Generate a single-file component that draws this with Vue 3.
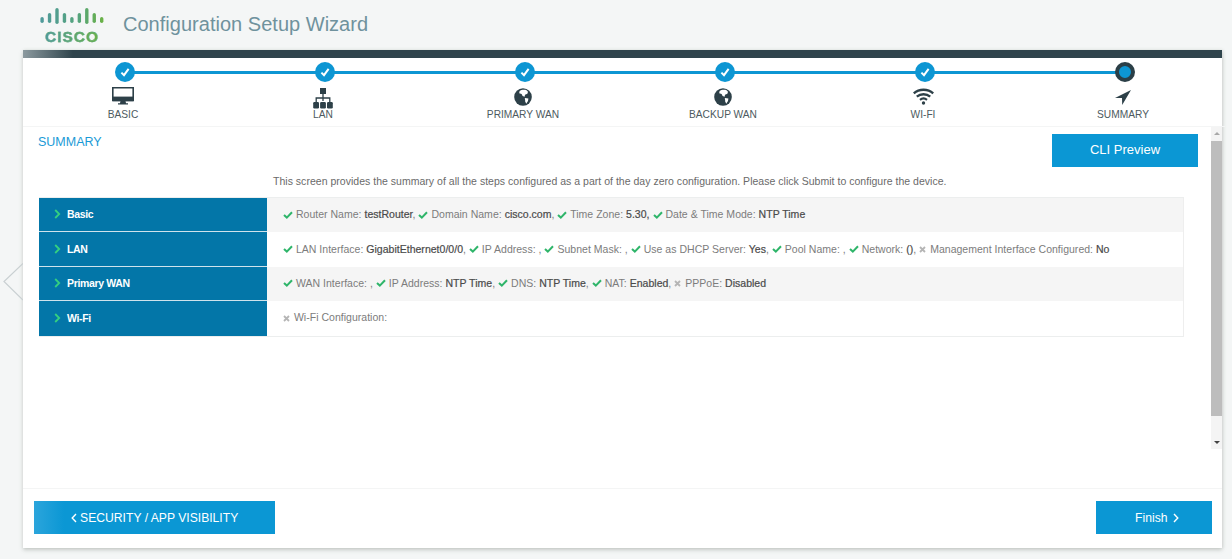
<script setup>
const steps = [
  { label: 'BASIC', icon: 'monitor', done: true },
  { label: 'LAN', icon: 'sitemap', done: true },
  { label: 'PRIMARY WAN', icon: 'globe', done: true },
  { label: 'BACKUP WAN', icon: 'globe', done: true },
  { label: 'WI-FI', icon: 'wifi', done: true },
  { label: 'SUMMARY', icon: 'arrow', done: false }
]
const rows = [
  { title: 'Basic', items: [
    { ok: true, k: 'Router Name:', v: 'testRouter', s: ',' },
    { ok: true, k: 'Domain Name:', v: 'cisco.com', s: ',' },
    { ok: true, k: 'Time Zone:', v: '5.30,', s: '' },
    { ok: true, k: 'Date & Time Mode:', v: 'NTP Time', s: '' }
  ] },
  { title: 'LAN', items: [
    { ok: true, k: 'LAN Interface:', v: 'GigabitEthernet0/0/0', s: ',' },
    { ok: true, k: 'IP Address:', v: '', s: ',' },
    { ok: true, k: 'Subnet Mask:', v: '', s: ',' },
    { ok: true, k: 'Use as DHCP Server:', v: 'Yes', s: ',' },
    { ok: true, k: 'Pool Name:', v: '', s: ',' },
    { ok: true, k: 'Network:', v: '()', s: ',' },
    { ok: false, k: 'Management Interface Configured:', v: 'No', s: '' }
  ] },
  { title: 'Primary WAN', items: [
    { ok: true, k: 'WAN Interface:', v: '', s: ',' },
    { ok: true, k: 'IP Address:', v: 'NTP Time', s: ',' },
    { ok: true, k: 'DNS:', v: 'NTP Time', s: ',' },
    { ok: true, k: 'NAT:', v: 'Enabled', s: ',' },
    { ok: false, k: 'PPPoE:', v: 'Disabled', s: '' }
  ] },
  { title: 'Wi-Fi', items: [
    { ok: false, k: 'Wi-Fi Configuration:', v: '', s: '' }
  ] }
]
const barShape = [[9, 6], [5, 10], [0, 16], [5, 10], [9, 6], [5, 10], [0, 16], [5, 10], [9, 6]]
const bars = barShape.map((b, i) => ({ x: 0.4 + 7.45 * i, y: b[0], h: b[1] }))
</script>

<template>
  <div class="page">
    <svg class="side-arrow" width="20" height="38" viewBox="0 0 20 38">
      <path d="M20 0.5 L1 18.5 L20 37" fill="none" stroke="#c9d0d2" stroke-width="1.2" />
    </svg>

    <header class="header">
      <div class="logo">
        <svg class="bars" width="64" height="16" viewBox="0 0 64 16">
          <defs>
            <linearGradient id="barGrad" x1="0" x2="64" y1="0" y2="0" gradientUnits="userSpaceOnUse">
              <stop offset="0" stop-color="#4f9a9c" />
              <stop offset="0.6" stop-color="#55a47c" />
              <stop offset="1" stop-color="#6bb244" />
            </linearGradient>
          </defs>
          <rect v-for="(b, i) in bars" :key="i" :x="b.x" :y="b.y" width="3.4" :height="b.h" rx="1.7" fill="url(#barGrad)" />
        </svg>
        <span class="cisco">CISCO</span>
      </div>
      <h1 class="app-title">Configuration Setup Wizard</h1>
    </header>

    <main class="panel">
      <div class="topbar"></div>

      <nav class="steps">
        <div v-for="(s, i) in steps" :key="s.label" class="step" :class="{ last: i === steps.length - 1 }">
          <span class="dot" :class="{ current: !s.done }">
            <svg v-if="s.done" width="12" height="12" viewBox="0 0 12 12">
              <path d="M2.4 6.6 L5 9.2 L9.6 2.8" fill="none" stroke="#fff" stroke-width="2" />
            </svg>
          </span>
          <span class="step-icon">
            <svg v-if="s.icon === 'monitor'" width="22" height="18" viewBox="0 0 22 18">
              <path d="M0.8 0.8 H21.2 V13.5 H0.8 Z" fill="none" stroke="#2d4048" stroke-width="1.6" />
              <path d="M0.8 9.6 H21.2 V14.2 H0.8 Z" fill="#2d4048" />
              <path d="M8.5 14 H13.5 L14 16.2 H16 V17.6 H6 V16.2 H8 Z" fill="#2d4048" />
            </svg>
            <svg v-else-if="s.icon === 'sitemap'" class="ic-sitemap" width="20" height="21" viewBox="0 0 20 21">
              <rect x="7" y="0" width="6" height="6" fill="#2d4048" />
              <path d="M10 5.5 V13 M3.2 14 V10 H16.8 V14" fill="none" stroke="#2d4048" stroke-width="1.3" />
              <rect x="0.2" y="14" width="5.8" height="6.4" rx="1.2" fill="#2d4048" />
              <rect x="7.1" y="14" width="5.8" height="6.4" rx="1.2" fill="#2d4048" />
              <rect x="14" y="14" width="5.8" height="6.4" rx="1.2" fill="#2d4048" />
            </svg>
            <svg v-else-if="s.icon === 'globe'" class="ic-globe" width="18" height="18" viewBox="0 0 18 18">
              <circle cx="9" cy="9" r="8.8" fill="#2d4048" />
              <path d="M5.6 3 C7 1.8 10 1.3 12.2 2.1 L14 3.8 L13.4 5.8 L11 6.8 L10.6 8.8 L8.6 8 L7.6 6 L5.2 5.2 Z" fill="#fff" />
              <path d="M10.8 10 L14.4 10.6 L14 13 L12.2 15.8 L11.2 13.2 Z" fill="#fff" />
            </svg>
            <svg v-else-if="s.icon === 'wifi'" class="ic-wifi" width="21" height="17" viewBox="0 0 21 17">
              <path d="M0.8 5.4 C6.2 0.6 14.8 0.6 20.2 5.4" fill="none" stroke="#2d4048" stroke-width="2.4" />
              <path d="M3.8 8.6 C7.6 5.4 13.4 5.4 17.2 8.6" fill="none" stroke="#2d4048" stroke-width="2.4" />
              <path d="M7 11.8 C9 10.2 12 10.2 14 11.8" fill="none" stroke="#2d4048" stroke-width="2.2" />
              <circle cx="10.5" cy="15" r="1.7" fill="#2d4048" />
            </svg>
            <svg v-else class="ic-arrow" width="16" height="15" viewBox="0 0 16 15">
              <path d="M16 0 L7.2 15 L7 8 L0 8 Z" fill="#2d4048" />
            </svg>
          </span>
          <span class="step-label">{{ s.label }}</span>
        </div>
      </nav>

      <section class="body">
        <div class="content">
          <div class="content-head">
            <h2 class="summary-title">SUMMARY</h2>
            <button class="cli-btn" type="button">CLI Preview</button>
          </div>
          <p class="intro">This screen provides the summary of all the steps configured as a part of the day zero configuration. Please click Submit to configure the device.</p>
          <div class="table">
            <div v-for="r in rows" :key="r.title" class="row">
              <div class="row-head">
                <svg width="7" height="10" viewBox="0 0 7 10"><path d="M1.2 1 L5.2 5 L1.2 9" fill="none" stroke="#35d07f" stroke-width="1.8" /></svg>
                <span>{{ r.title }}</span>
              </div>
              <div class="row-body">
                <span v-for="(it, j) in r.items" :key="j" class="item">
                  <svg v-if="it.ok" class="mark" width="10" height="8" viewBox="0 0 10 8"><path d="M1 4 L3.8 6.6 L9 1.2" fill="none" stroke="#2fb56a" stroke-width="2" /></svg>
                  <svg v-else class="mark x" width="7" height="7" viewBox="0 0 7 7"><path d="M1 1 L6 6 M6 1 L1 6" fill="none" stroke="#b5b5b5" stroke-width="1.8" /></svg>
                  {{ it.k }} <b v-if="it.v">{{ it.v }}</b>{{ it.v ? it.s : (it.s ? ' ' + it.s : '') }}
                </span>
              </div>
            </div>
          </div>
        </div>
        <div class="scrollbar">
          <span class="sb-up"></span>
          <span class="sb-thumb"></span>
          <span class="sb-down"></span>
        </div>
      </section>

      <footer class="footer">
        <button class="nav-btn prev" type="button">
          <svg width="6" height="10" viewBox="0 0 6 10"><path d="M5 1 L1.2 5 L5 9" fill="none" stroke="#fff" stroke-width="1.4" /></svg>
          SECURITY / APP VISIBILITY
        </button>
        <button class="nav-btn next" type="button">
          Finish
          <svg width="6" height="10" viewBox="0 0 6 10"><path d="M1 1 L4.8 5 L1 9" fill="none" stroke="#fff" stroke-width="1.4" /></svg>
        </button>
      </footer>
    </main>
  </div>
</template>

<style scoped>
.page {
  position: relative;
  width: 1232px;
  height: 559px;
  overflow: hidden;
  background: #f4f6f6;
  font-family: "Liberation Sans", Arial, sans-serif;
  color: #666;
}
.side-arrow {
  position: absolute;
  left: 3px;
  top: 263px;
}
.header {
  height: 50px;
  display: flex;
  align-items: flex-start;
  padding-left: 40px;
}
.logo {
  width: 64px;
  height: 50px;
  padding-top: 8px;
  box-sizing: border-box;
  display: flex;
  flex-direction: column;
  align-items: center;
}
.bars { display: block; flex: none; }
.cisco {
  font-size: 15.5px;
  line-height: 14px;
  margin-top: 6px;
  font-weight: 700;
  letter-spacing: 1px;
  -webkit-text-stroke: 0.3px #55a47c;
  background: linear-gradient(90deg, #4f9a9c, #6bb244);
  -webkit-background-clip: text;
  background-clip: text;
  color: transparent;
}
.app-title {
  margin: 12px 0 0 19px;
  font-size: 20px;
  line-height: 24px;
  font-weight: 400;
  letter-spacing: 0.02px;
  color: #6f929d;
  white-space: nowrap;
}
.panel {
  margin-left: 23px;
  width: 1199px;
  height: 498px;
  background: #fff;
  box-shadow: 0 2px 4px rgba(120, 130, 120, 0.35), 1px 0 3px rgba(120, 130, 120, 0.15);
  display: flex;
  flex-direction: column;
}
.topbar {
  height: 8px;
  flex: none;
  background: linear-gradient(90deg, #8c9a9f 0, #2f444c 50px);
}
.steps {
  flex: none;
  height: 69px;
  box-sizing: border-box;
  margin-right: -3px;
  padding-left: 2px;
  display: grid;
  grid-template-columns: repeat(6, 200px);
  border-bottom: 1px solid #f4f5f5;
}
.step {
  position: relative;
  display: flex;
  flex-direction: column;
  align-items: center;
  padding-top: 4px;
}
.step::after {
  content: "";
  position: absolute;
  left: 50%;
  top: 12.5px;
  width: 200px;
  height: 3px;
  background: #0d96d3;
}
.step.last::after { display: none; }
.dot {
  position: relative;
  z-index: 1;
  width: 20px;
  height: 20px;
  box-sizing: border-box;
  border-radius: 50%;
  background: #0d96d3;
  display: flex;
  align-items: center;
  justify-content: center;
}
.dot.current {
  border: 4px solid #2b3f47;
}
.step-icon {
  height: 20px;
  margin: 4px 4px 0 0;
  display: flex;
  align-items: center;
  justify-content: center;
}
.ic-sitemap { margin-top: 4px; }
.ic-globe { margin-top: 1px; }
.ic-wifi { margin-top: 1px; }
.ic-arrow { margin-top: 3px; }
.step-label {
  margin: 1.5px 4px 0 0;
  font-size: 10.2px;
  line-height: 14px;
  color: #4d5a60;
  white-space: nowrap;
}
.body {
  flex: none;
  height: 322px;
  display: flex;
}
.content {
  flex: 1;
  min-width: 0;
}
.content-head {
  display: flex;
  justify-content: space-between;
  align-items: flex-start;
  padding: 7px 13px 0 15px;
}
.summary-title {
  margin: 1px 0 0;
  font-size: 12.5px;
  line-height: 15px;
  font-weight: 400;
  color: #1a9ad6;
}
.cli-btn {
  width: 146px;
  height: 33px;
  border: 0;
  padding: 0 0 2px;
  background: #0b97d4;
  color: #fff;
  font: 400 13px "Liberation Sans", Arial, sans-serif;
}
.intro {
  margin: 7px 0 0;
  padding-left: 250px;
  font-size: 10.5px;
  line-height: 14px;
  letter-spacing: 0.02px;
  color: #6a6a6a;
  white-space: nowrap;
}
.table {
  margin: 9px 0 0 16px;
  width: 1144px;
  border-top: 1px solid #eceeee;
  border-bottom: 1px solid #eceeee;
  border-right: 1px solid #eeeeee;
}
.row {
  display: flex;
  height: 34.4px;
}
.row:nth-child(odd) .row-body { background: #f5f5f5; }
.row-head {
  flex: none;
  width: 228px;
  box-sizing: border-box;
  padding: 0 0 1px 15px;
  display: flex;
  align-items: center;
  gap: 6px;
  background: #0376a8;
  color: #fff;
  font-size: 10.5px;
  letter-spacing: -0.35px;
  font-weight: 700;
  border-bottom: 1px solid #cfe3ec;
}
.row:last-child .row-head { border-bottom: 0; }
.row-body {
  flex: 1;
  min-width: 0;
  padding: 0 0 2px 16px;
  display: flex;
  align-items: center;
  font-size: 10.5px;
  letter-spacing: 0.02px;
  color: #7c7c7c;
  white-space: pre-wrap;
}
.item { margin-right: 3px; white-space: nowrap; }
.item b { font-weight: 400; color: #4a4a4a; -webkit-text-stroke: 0.2px #4a4a4a; }
.mark { vertical-align: -0.5px; }
.mark.x { margin-right: 1px; }
.scrollbar {
  flex: none;
  width: 11px;
  background: #f4f4f4;
  display: flex;
  flex-direction: column;
  align-items: center;
  position: relative;
}
.sb-up, .sb-down {
  flex: none;
  width: 0;
  height: 0;
  border-left: 3px solid transparent;
  border-right: 3px solid transparent;
}
.sb-up { margin-top: 5px; border-bottom: 3px solid #a8a8a8; }
.sb-thumb {
  flex: none;
  width: 11px;
  height: 275px;
  margin-top: 6px;
  background: #bdbdbd;
}
.sb-down { margin-top: 25px; border-top: 3px solid #444; }
.footer {
  flex: none;
  margin-top: 39px;
  height: 60px;
  border-top: 1px solid #f4f5f5;
  padding: 12px 10px 0 11px;
  display: flex;
  justify-content: space-between;
  align-items: flex-start;
}
.nav-btn {
  height: 33px;
  border: 0;
  padding: 0;
  color: #fff;
  font: 400 12.15px "Liberation Sans", Arial, sans-serif;
  background: #0b97d4;
}
.nav-btn svg { vertical-align: -1px; }
.prev {
  width: 241px;
  background: linear-gradient(90deg, #2ba5dc 0, #0b97d4 30px);
}
.next { width: 116px; padding-left: 6px; }
.next svg { margin-left: 2px; }
</style>

<style>
html, body { margin: 0; background: #f4f6f6; }
</style>
